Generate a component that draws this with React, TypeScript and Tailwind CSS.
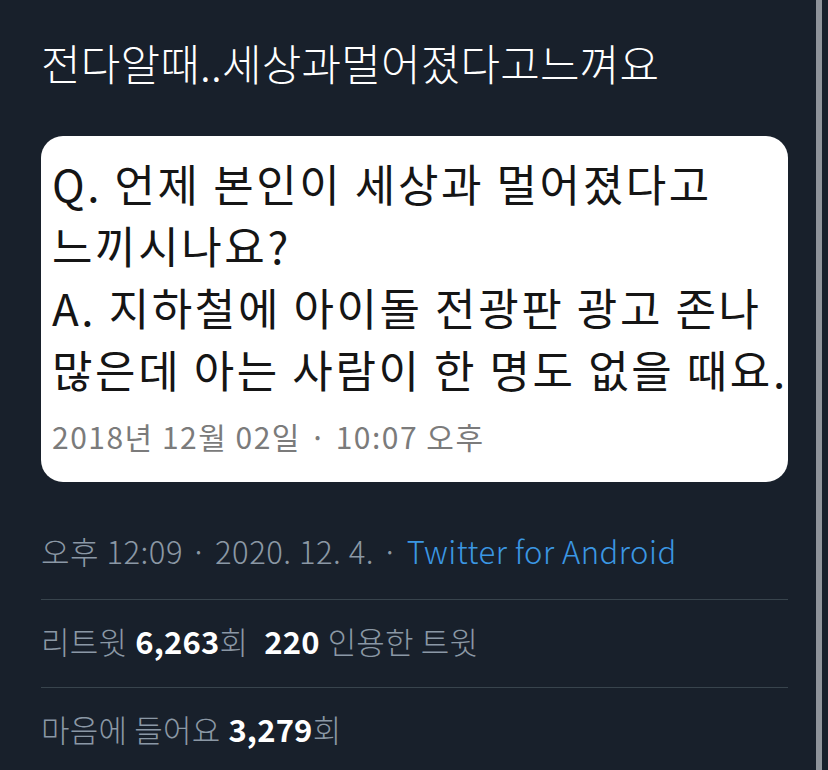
import React from "react"

const kr = { fontFamily: '"Noto Sans CJK KR", "Noto Sans", sans-serif' }

const lines = [
  "Q. 언제 본인이 세상과 멀어졌다고",
  "느끼시나요?",
  "A. 지하철에 아이돌 전광판 광고 존나",
  "많은데 아는 사람이 한 명도 없을 때요.",
]

const App = () => {
  return (
    <div className="flex h-[770px] w-[828px] overflow-hidden bg-[#18202b]" style={kr}>
      <div className="flex flex-1 flex-col pl-[41px] pr-[28px]">
        {/* title */}
        <div className="flex h-[124px] shrink-0 items-center">
          <h1 className="text-[43px] font-light leading-none tracking-[0.2px] text-white">
            전다알때..세상과멀어졌다고느껴요
          </h1>
        </div>

        {/* captured screenshot */}
        <div className="mt-[12px] flex h-[346px] shrink-0 flex-col rounded-[22px] bg-white pl-[11px] pt-[16px]">
          {lines.map((l) => (
            <div
              key={l}
              className="whitespace-nowrap text-[44px] leading-[62px] tracking-[2.6px] text-[#151515]"
            >
              {l}
            </div>
          ))}
          <div className="mt-[14px] whitespace-nowrap text-[30px] leading-[44px] tracking-[1.5px] text-[#7b7b7b]">
            2018년 12월 02일 · 10:07 오후
          </div>
        </div>

        {/* meta */}
        <div className="flex h-[117px] shrink-0 items-center pt-[21px] text-[31px] font-light tracking-[0.5px] text-[#8b98a5]">
          <span>오후 12:09 · 2020. 12. 4. · </span>
          <span className="ml-[8px] text-[#3b97e3]">Twitter for Android</span>
        </div>
        <div className="h-px shrink-0 bg-[#38444d]" />
        <div className="flex h-[87px] shrink-0 items-center pb-[4px] text-[31px] font-light tracking-[0.2px] text-[#8b98a5]">
          <span>리트윗</span>
          <span className="ml-[8px] font-semibold text-white">6,263</span>
          <span>회</span>
          <span className="ml-[16px] font-semibold text-white">220</span>
          <span className="ml-[8px]">인용한 트윗</span>
        </div>
        <div className="h-px shrink-0 bg-[#38444d]" />
        <div className="flex h-[88px] shrink-0 items-center pb-[5px] text-[31px] font-light tracking-[0.2px] text-[#8b98a5]">
          <span>마음에 들어요</span>
          <span className="ml-[8px] font-semibold text-white">3,279</span>
          <span>회</span>
        </div>
      </div>
      <div className="w-[6px] bg-[#8e939a]" />
      <div className="w-[6px]" />
    </div>
  )
}

export default App
